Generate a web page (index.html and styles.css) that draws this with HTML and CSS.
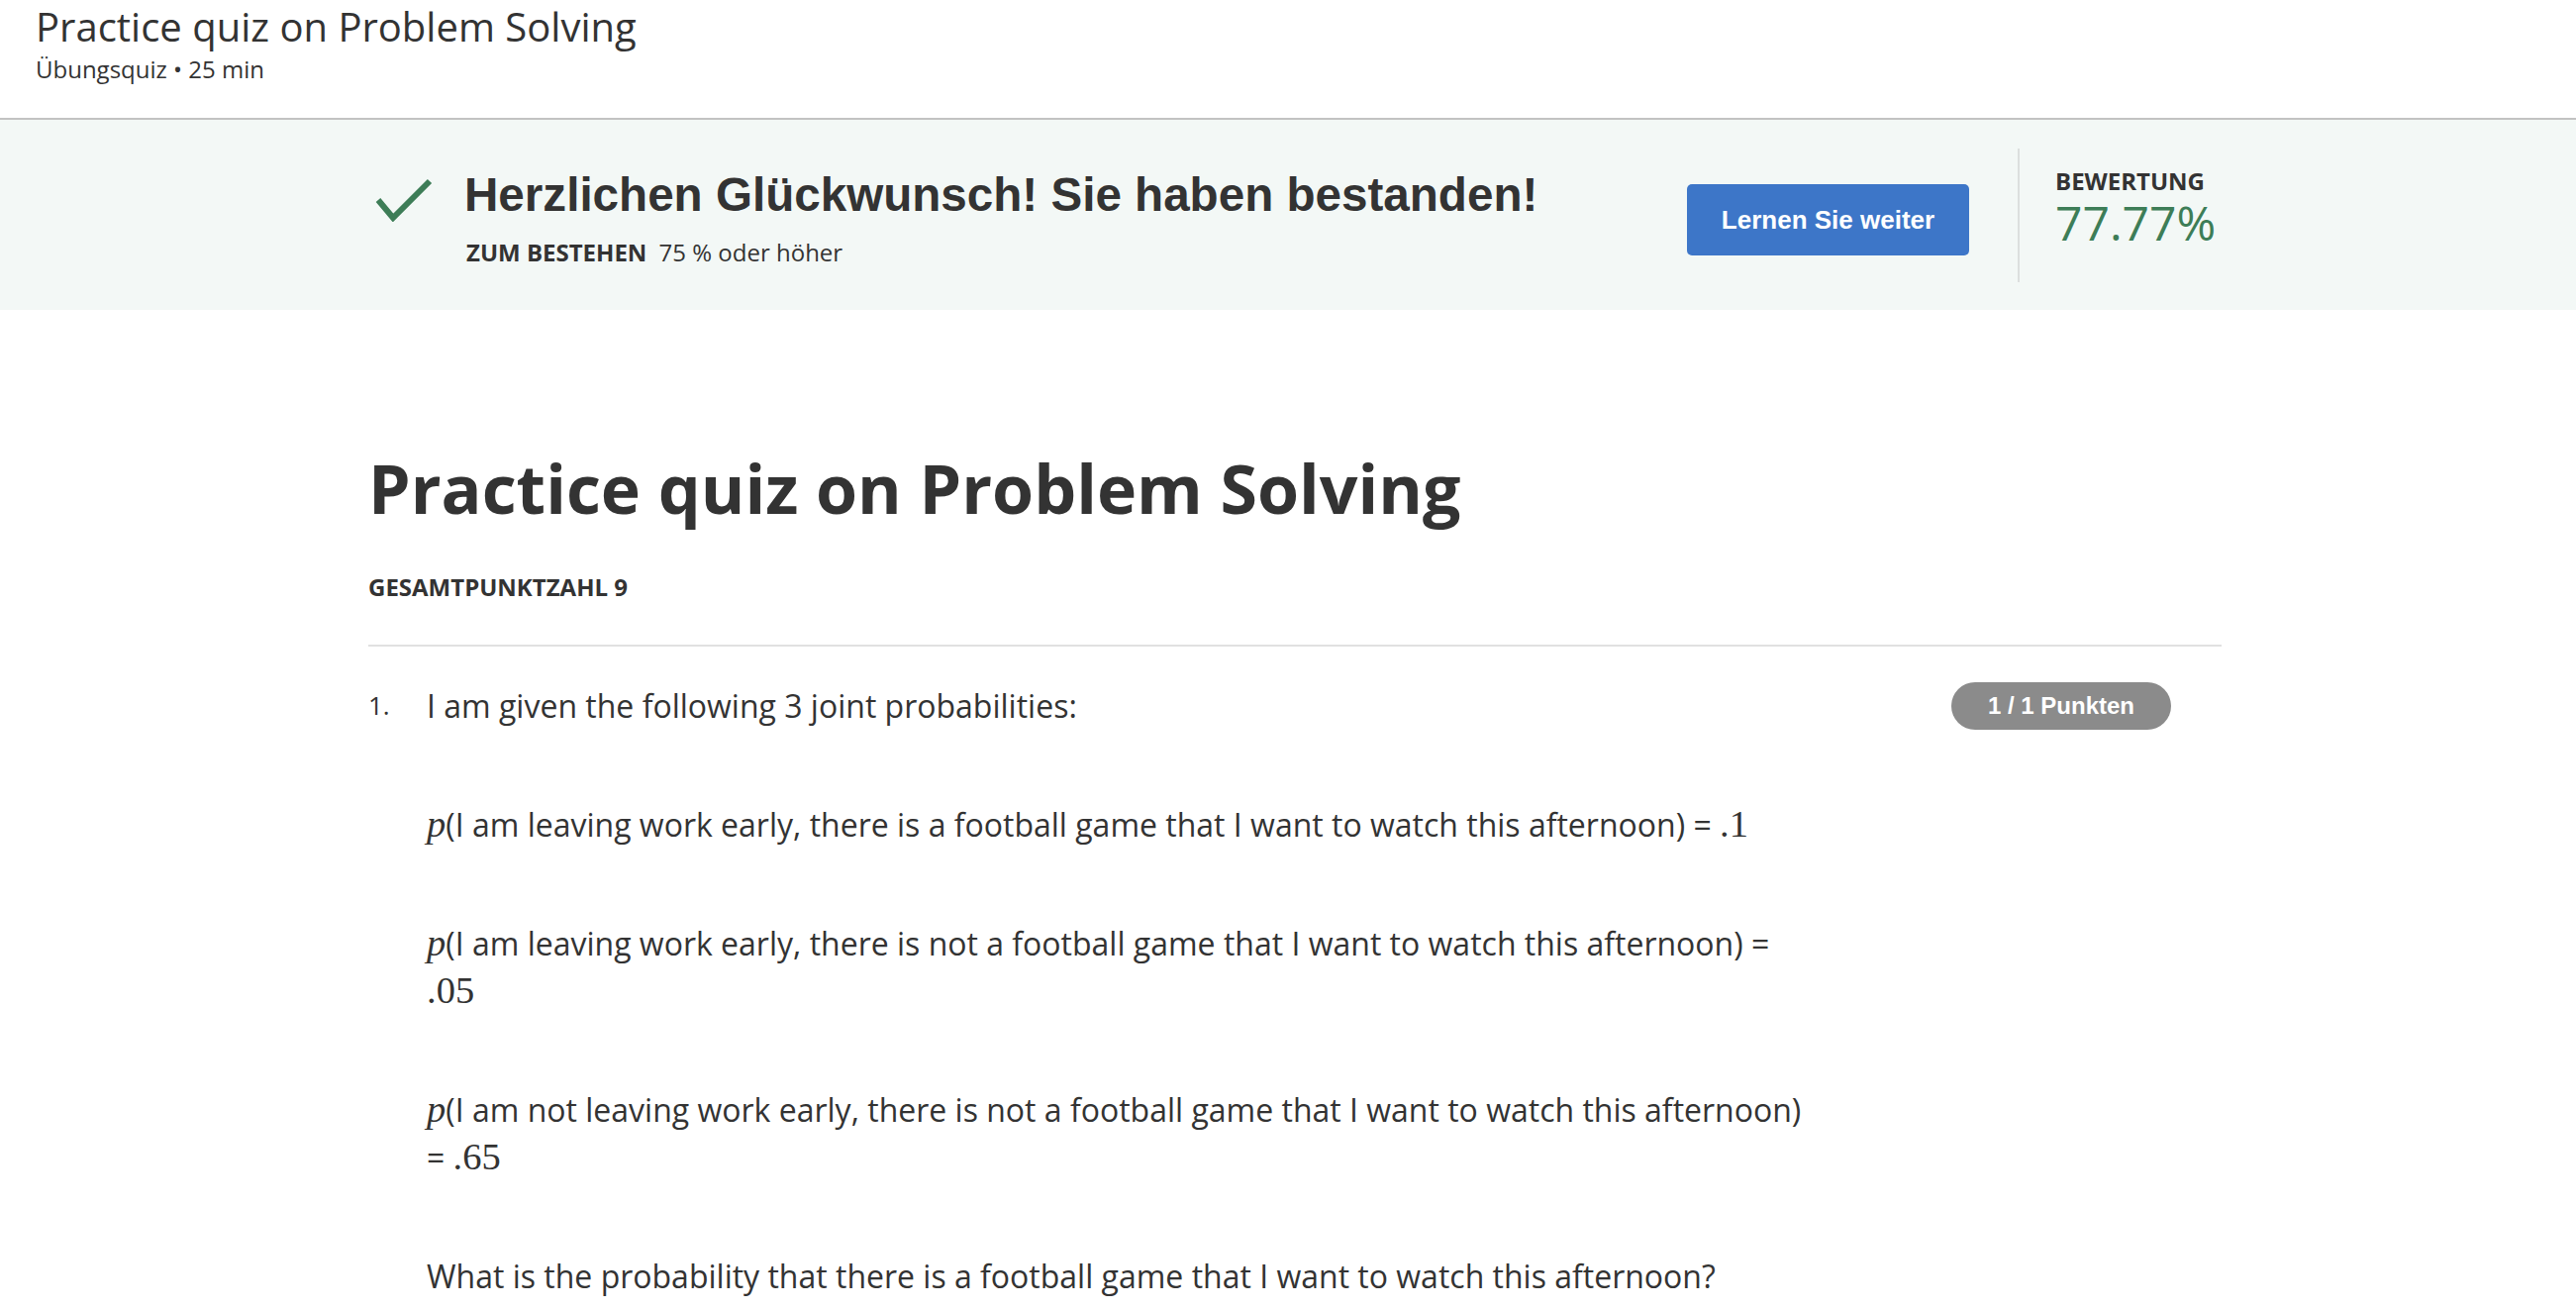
FILE: index.html
```html
<!DOCTYPE html>
<html lang="de">
<head>
<meta charset="utf-8">
<title>Practice quiz on Problem Solving</title>
<link rel="stylesheet" href="styles.css">
</head>
<body>
<header class="top">
  <h1 class="top-title">Practice quiz on Problem Solving</h1>
  <div class="top-sub">Übungsquiz • 25 min</div>
</header>

<section class="banner">
  <div class="banner-inner">
    <div class="result">
      <svg class="check" width="60" height="46" viewBox="0 0 60 46" aria-hidden="true">
        <polyline points="4,24 19,42 56,5" fill="none" stroke="#3d7d57" stroke-width="6"/>
      </svg>
      <div class="result-text">
        <div class="result-head">Herzlichen Glückwunsch! Sie haben bestanden!</div>
        <div class="result-pass"><span class="pass-label">ZUM BESTEHEN</span> 75 % oder höher</div>
      </div>
    </div>
    <button class="continue">Lernen Sie weiter</button>
    <div class="vdiv"></div>
    <div class="grade">
      <div class="grade-label">BEWERTUNG</div>
      <div class="grade-value">77.77%</div>
    </div>
  </div>
</section>

<main class="quiz">
  <h2 class="quiz-title">Practice quiz on Problem Solving</h2>
  <div class="total">GESAMTPUNKTZAHL 9</div>
  <hr class="rule">
  <div class="question">
    <div class="qnum">1.</div>
    <div class="qbody">
      <p class="para">I am given the following 3 joint probabilities:</p>
      <p class="para"><span class="mi">p</span>(I am leaving work early, there is a football game that I want to watch this afternoon) = <span class="mn">.1</span></p>
      <p class="para"><span class="mi">p</span>(I am leaving work early, there is not a football game that I want to watch this afternoon) = <span class="mn">.05</span></p>
      <p class="para"><span class="mi">p</span>(I am not leaving work early, there is not a football game that I want to watch this afternoon) = <span class="mn">.65</span></p>
      <p class="para">What is the probability that there is a football game that I want to watch this afternoon?</p>
    </div>
    <div class="badge">1 / 1 Punkten</div>
  </div>
</main>
</body>
</html>
```

FILE: styles.css
```css
html, body {
  margin: 0;
  padding: 0;
  background: #ffffff;
}
body {
  font-family: "Open Sans", "Noto Sans", sans-serif;
  color: #333333;
}

/* header */
.top {
  padding: 4px 36px 0;
  height: 115px;
  border-bottom: 2px solid #c2c2c2;
}
.top-title {
  margin: 0;
  font-size: 40px;
  line-height: 46px;
  font-weight: 400;
  color: #333333;
}
.top-sub {
  margin-top: 5px;
  font-size: 24px;
  line-height: 30px;
  color: #333333;
}

/* banner */
.banner {
  background: #f3f8f6;
  height: 192px;
}
.banner-inner {
  margin-left: 372px;
  width: 1872px;
  display: flex;
  align-items: flex-start;
}
.result {
  flex: 1;
  display: flex;
  align-items: flex-start;
  padding-top: 48px;
}
.check {
  margin-left: 6px;
  margin-top: 9px;
  flex: none;
}
.result-text {
  margin-left: 31px;
}
.result-head {
  font-family: "Liberation Sans", Arial, sans-serif;
  font-weight: 700;
  font-size: 47.6px;
  line-height: 56px;
  color: #333333;
}
.result-pass {
  margin-top: 15px;
  margin-left: 2px;
  font-size: 24px;
  line-height: 30px;
  color: #333333;
}
.pass-label {
  font-weight: 700;
  margin-right: 6px;
}
.continue {
  flex: none;
  margin-top: 65px;
  width: 285px;
  height: 72px;
  border: 0;
  border-radius: 5px;
  background: #3d76c8;
  color: #ffffff;
  font-family: "Liberation Sans", Arial, sans-serif;
  font-weight: 700;
  font-size: 26px;
  padding: 0;
}
.vdiv {
  flex: none;
  margin-top: 29px;
  margin-left: 49px;
  width: 2px;
  height: 135px;
  background: #dcdfde;
}
.grade {
  flex: none;
  margin-left: 36px;
  width: 168px;
  padding-top: 49px;
}
.grade-label {
  font-size: 24px;
  line-height: 26px;
  font-weight: 700;
  color: #333333;
}
.grade-value {
  margin-top: 4px;
  font-size: 48px;
  line-height: 50px;
  font-weight: 400;
  color: #3d7d57;
}

/* quiz */
.quiz {
  margin-left: 372px;
  width: 1872px;
  padding-top: 138px;
}
.quiz-title {
  margin: 0;
  font-size: 68px;
  line-height: 84px;
  font-weight: 700;
  color: #333333;
}
.total {
  margin-top: 43px;
  font-size: 24px;
  line-height: 30px;
  font-weight: 700;
  color: #333333;
}
.rule {
  margin: 43px 0 0;
  border: 0;
  height: 2px;
  background: #e1e1e1;
}
.question {
  display: flex;
  align-items: flex-start;
  margin-top: 36px;
}
.qnum {
  flex: none;
  width: 59px;
  font-size: 26px;
  line-height: 46px;
}
.qbody {
  flex: 1;
  margin-right: 141px;
}
.para {
  margin: 0 0 72px;
  font-size: 32px;
  line-height: 48px;
  color: #333333;
}
.mi {
  font-family: "Liberation Serif", "DejaVu Serif", serif;
  font-style: italic;
  font-size: 38.5px;
  line-height: 0;
}
.mn {
  font-family: "Liberation Serif", "DejaVu Serif", serif;
  font-size: 38.5px;
  line-height: 0;
}
.badge {
  flex: none;
  width: 222px;
  height: 48px;
  margin-right: 51px;
  border-radius: 24px;
  background: #8b8b8b;
  color: #ffffff;
  font-family: "Liberation Sans", Arial, sans-serif;
  font-weight: 700;
  font-size: 24px;
  line-height: 48px;
  text-align: center;
}
```
